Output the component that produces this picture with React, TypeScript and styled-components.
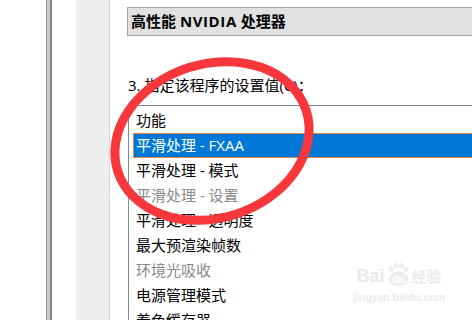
import styled, { createGlobalStyle } from "styled-components";

const GlobalStyle = createGlobalStyle`
  html, body {
    margin: 0;
    padding: 0;
    background: #fff;
  }
  body {
    font-family: "Open Sans", "Noto Sans CJK SC", sans-serif;
    color: #000;
  }
`;

type RowState = "normal" | "selected" | "disabled";

const features: { label: string; state: RowState }[] = [
  { label: "功能", state: "normal" },
  { label: "平滑处理 - FXAA", state: "selected" },
  { label: "平滑处理 - 模式", state: "normal" },
  { label: "平滑处理 - 设置", state: "disabled" },
  { label: "平滑处理 - 透明度", state: "normal" },
  { label: "最大预渲染帧数", state: "normal" },
  { label: "环境光吸收", state: "disabled" },
  { label: "电源管理模式", state: "normal" },
  { label: "着色缓存器", state: "normal" },
];

const App = () => {
  return (
    <>
      <GlobalStyle />
      <Page>
        <Gutter />
        <Splitter />
        <Gap />
        <SidePanel />
        <Content>
          <HeaderBox>
            高性能 <Latin>NVIDIA</Latin> 处理器
          </HeaderBox>
          <StepLabel>3. 指定该程序的设置值(C)：</StepLabel>
          <ListBox>
            {features.map((f) => (
              <Row key={f.label} $state={f.state}>
                {f.label}
              </Row>
            ))}
          </ListBox>
        </Content>

        <Marker viewBox="0 0 472 320">
          <ellipse
            cx="212"
            cy="141"
            rx="99"
            ry="77"
            transform="rotate(-18 212 141)"
            fill="none"
            stroke="#f7373c"
            strokeWidth="9"
          />
        </Marker>

        <Watermark>
          <Brand>
            Bai
            <PawMark viewBox="0 0 26 26">
              <circle cx="6" cy="7" r="2.6" />
              <circle cx="11" cy="3.6" r="2.6" />
              <circle cx="16.5" cy="3.6" r="2.6" />
              <circle cx="21" cy="7" r="2.6" />
              <path d="M4 17c0-4 4-7.5 9.5-7.5S23 13 23 17s-3.5 7-9.5 7S4 21 4 17z" />
              <text x="13.5" y="21" textAnchor="middle">
                du
              </text>
            </PawMark>
            <BrandCn>经验</BrandCn>
          </Brand>
          <Site>jingyan.baidu.com</Site>
        </Watermark>
      </Page>
    </>
  );
};

const Page = styled.div`
  position: relative;
  display: flex;
  width: 472px;
  height: 320px;
  overflow: hidden;
  background: #fff;
`;

const Gutter = styled.div`
  width: 46px;
  flex-shrink: 0;
`;

const Splitter = styled.div`
  width: 3px;
  flex-shrink: 0;
  border-left: 1px solid #9a9a9a;
  border-right: 2px solid #858585;
  background: #c9c9cf;
`;

const Gap = styled.div`
  width: 24px;
  flex-shrink: 0;
`;

const SidePanel = styled.div`
  width: 33px;
  flex-shrink: 0;
  background: #eeeeee;
  border-right: 1px solid #d9d9d9;
`;

const Content = styled.div`
  flex: 1;
  min-width: 0;
  display: flex;
  flex-direction: column;
  padding: 7px 0 0 17px;
`;

const HeaderBox = styled.div`
  height: 27px;
  margin-right: -20px;
  padding-left: 3px;
  border: 1px solid #a3a3a3;
  background: #e1e1e1;
  font-size: 15px;
  font-weight: 700;
  line-height: 27px;
  white-space: nowrap;
`;

const Latin = styled.span`
  letter-spacing: 0.6px;
`;

const StepLabel = styled.div`
  margin-top: 39px;
  padding-left: 1px;
  font-size: 15px;
  line-height: 20px;
  white-space: nowrap;
`;

const ListBox = styled.div`
  margin-top: 10px;
  margin-left: 1px;
  margin-right: -20px;
  padding: 2px 0 0 4px;
  border-top: 1px solid #828790;
  border-left: 1px solid #828790;
  flex: 1;
`;

const Row = styled.div<{ $state: RowState }>`
  height: 23px;
  padding-left: 2px;
  border: 1px solid
    ${(p) => (p.$state === "selected" ? "#e8853a" : "transparent")};
  background: ${(p) => (p.$state === "selected" ? "#0078d7" : "transparent")};
  color: ${(p) =>
    p.$state === "selected" ? "#fff" : p.$state === "disabled" ? "#8a8a8a" : "#000"};
  font-size: 15px;
  line-height: 23px;
  white-space: nowrap;
`;

const Marker = styled.svg`
  position: absolute;
  inset: 0;
  width: 472px;
  height: 320px;
  pointer-events: none;
`;

const Watermark = styled.div`
  position: absolute;
  left: 354px;
  top: 262px;
  width: 90px;
  display: flex;
  flex-direction: column;
  align-items: center;
  color: #ebebeb;
  pointer-events: none;
`;

const Brand = styled.div`
  display: flex;
  align-items: flex-end;
  height: 26px;
  font-family: "Liberation Sans", Arial, sans-serif;
  font-size: 18px;
  font-weight: 700;
  line-height: 24px;
  white-space: nowrap;
`;

const PawMark = styled.svg`
  width: 26px;
  height: 26px;
  margin: 0 1px 0 0;
  fill: #ededed;

  text {
    fill: #fff;
    font-family: "Liberation Sans", Arial, sans-serif;
    font-size: 10px;
    font-weight: 700;
  }
`;

const BrandCn = styled.span`
  font-family: "Noto Sans CJK SC", sans-serif;
  font-size: 15px;
  line-height: 24px;
`;

const Site = styled.div`
  margin-top: 2px;
  font-family: "Liberation Sans", Arial, sans-serif;
  font-size: 10.5px;
  font-weight: 700;
  line-height: 14px;
`;

export default App;
